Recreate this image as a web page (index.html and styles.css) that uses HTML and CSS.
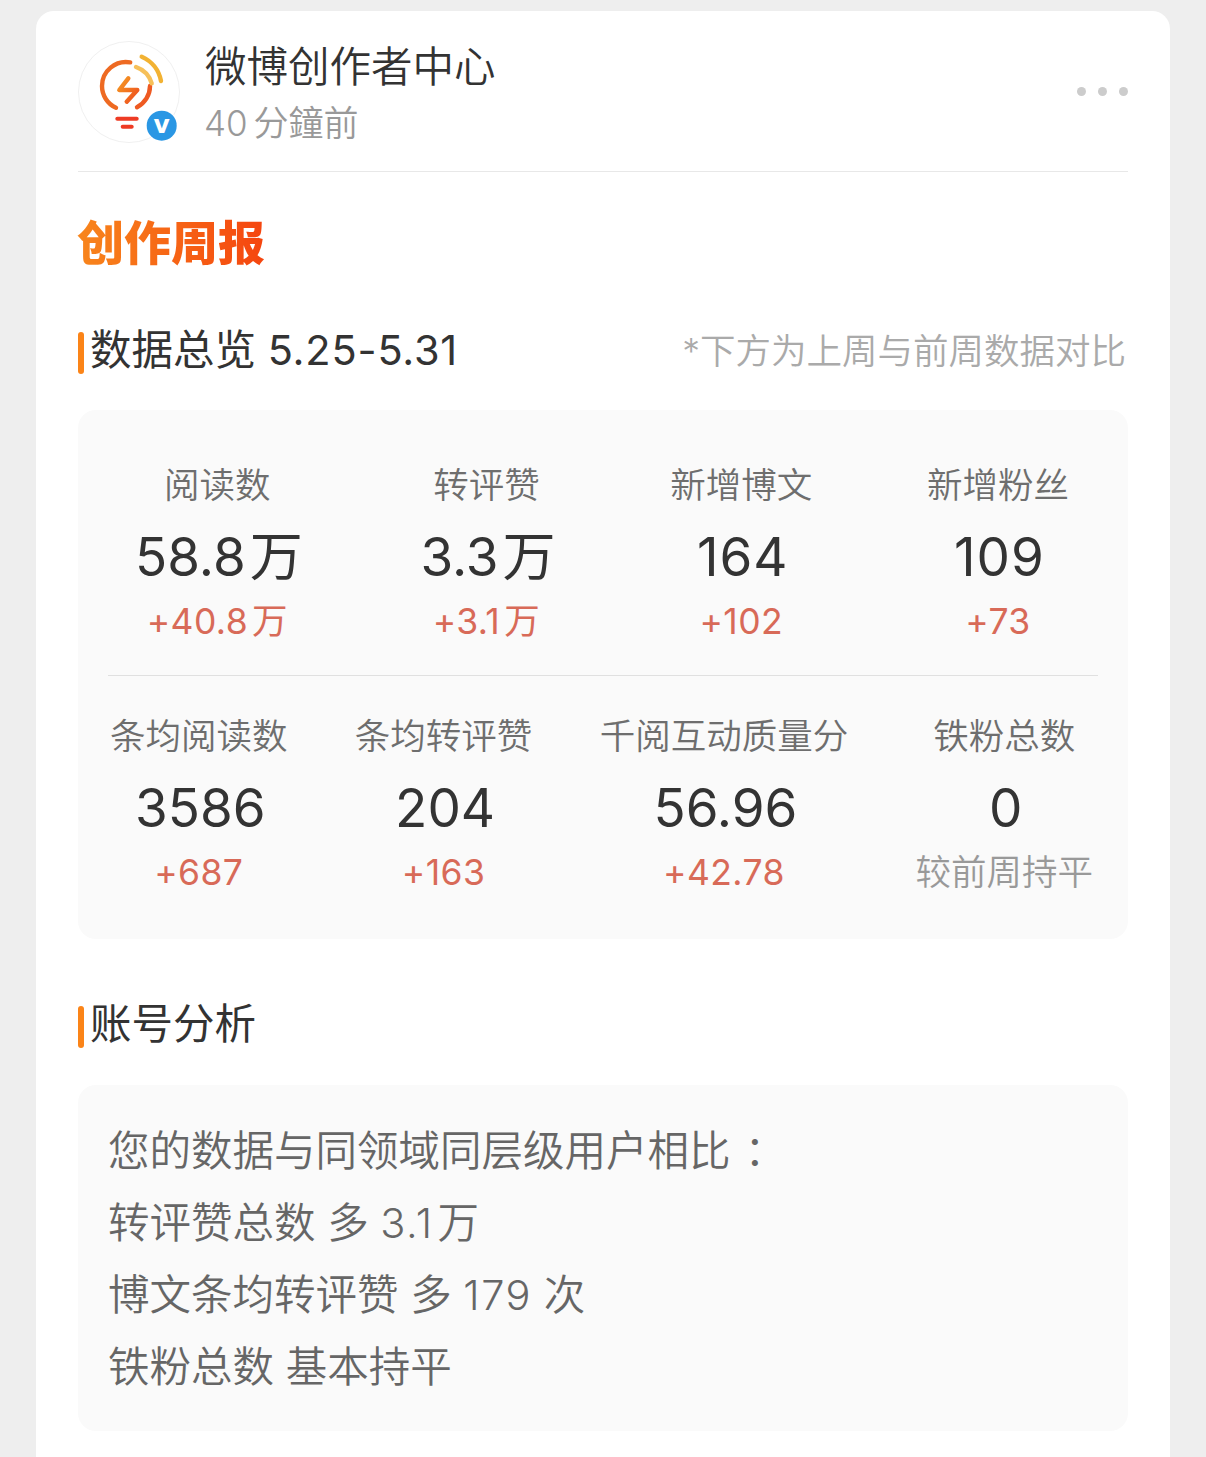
FILE: index.html
```html
<!DOCTYPE html>
<html lang="zh">
  <head>
    <meta charset="UTF-8" />
    <title>创作周报</title>
    <link rel="stylesheet" href="styles.css">
  </head>

  <body>
    <div class="card">
      <div class="head">
        <svg class="avatar" width="102" height="102" viewBox="0 0 102 102">
          <defs>
            <linearGradient id="bulb" x1="0" y1="0" x2="1" y2="1">
              <stop offset="0" stop-color="#f59a23" />
              <stop offset="1" stop-color="#ee4d1f" />
            </linearGradient>
          </defs>
          <circle cx="51" cy="51" r="50.5" fill="#fff" stroke="#f0f0f0" />
          <path d="M52.2 21.4A24 24 0 0 0 24 45A24 24 0 0 0 38 66.8" fill="none" stroke="#ee6a22" stroke-width="4.4" stroke-linecap="round" />
          <path d="M59 66.3A24 24 0 0 0 72 45" fill="none" stroke="#ee5a22" stroke-width="4.4" stroke-linecap="round" />
          <path d="M50.3 37.3L41.3 49H59.3L48.7 60.7" fill="none" stroke="url(#bulb)" stroke-width="4.4" stroke-linecap="round" stroke-linejoin="round" />
          <path d="M39.3 77.7H58.7" stroke="#ee3b24" stroke-width="4" stroke-linecap="round" />
          <path d="M44.7 85.7H53.7" stroke="#ee3b24" stroke-width="4" stroke-linecap="round" />
          <path d="M58 26A25 25 0 0 1 73.7 42.3" fill="none" stroke="#f6c05a" stroke-width="4.4" stroke-linecap="round" />
          <path d="M63.7 15.7A33 33 0 0 1 83 40" fill="none" stroke="#f2b233" stroke-width="4.4" stroke-linecap="round" />
          <circle cx="83.7" cy="84.7" r="16" fill="#fff" />
          <circle cx="83.7" cy="84.7" r="15" fill="#2a97e4" />
          <text x="83.7" y="91.5" text-anchor="middle" class="badge-v">v</text>
        </svg>
        <div class="who">
          <div class="who-name">微博创作者中心</div>
          <div class="who-time">40 分鐘前</div>
        </div>
        <div class="more"><i></i><i></i><i></i></div>
      </div>

      <h1 class="title"><span>创作周报</span></h1>

      <div class="sec">
        <h2 class="sec-name">数据总览 <span class="sec-date">5.25-5.31</span></h2>
        <div class="sec-note">*下方为上周与前周数据对比</div>
      </div>

      <div class="panel">
        <div class="stats stats-top">
          <div class="stat">
            <div class="stat-label">阅读数</div>
            <div class="stat-num">58.8<span class="unit">万</span></div>
            <div class="stat-up">+40.8<span class="unit">万</span></div>
          </div>
          <div class="stat">
            <div class="stat-label">转评赞</div>
            <div class="stat-num">3.3<span class="unit">万</span></div>
            <div class="stat-up">+3.1<span class="unit">万</span></div>
          </div>
          <div class="stat">
            <div class="stat-label">新增博文</div>
            <div class="stat-num stat-num-wide">164</div>
            <div class="stat-up">+102</div>
          </div>
          <div class="stat">
            <div class="stat-label">新增粉丝</div>
            <div class="stat-num stat-num-wide">109</div>
            <div class="stat-up">+73</div>
          </div>
        </div>
        <div class="stats stats-bottom">
          <div class="stat">
            <div class="stat-label">条均阅读数</div>
            <div class="stat-num">3586</div>
            <div class="stat-up">+687</div>
          </div>
          <div class="stat">
            <div class="stat-label">条均转评赞</div>
            <div class="stat-num">204</div>
            <div class="stat-up">+163</div>
          </div>
          <div class="stat">
            <div class="stat-label">千阅互动质量分</div>
            <div class="stat-num">56.96</div>
            <div class="stat-up">+42.78</div>
          </div>
          <div class="stat">
            <div class="stat-label">铁粉总数</div>
            <div class="stat-num">0</div>
            <div class="stat-same">较前周持平</div>
          </div>
        </div>
      </div>

      <div class="sec sec-second">
        <h2 class="sec-name">账号分析</h2>
      </div>

      <div class="panel panel-text">
        <p>您的数据与同领域同层级用户相比<span class="colon">：</span></p>
        <p>转评赞总数 多 <span class="digits">3.1</span><span class="unit">万</span></p>
        <p>博文条均转评赞 多 <span class="digits">179</span> 次</p>
        <p>铁粉总数 基本持平</p>
      </div>
    </div>
  </body>
</html>
```

FILE: styles.css
```css
* {
  box-sizing: border-box;
}

html,
body {
  height: 1457px;
  overflow: hidden;
}

body {
  margin: 0;
  background-color: #eeeeee;
  color: #333333;
  font-family: Inter, "Noto Sans CJK SC", sans-serif;
  font-weight: 350;
}

.card {
  margin: 11px 36px 0;
  padding: 0 42px 26px;
  background-color: #ffffff;
  border-radius: 18px;
  height: 1500px;
}

.head {
  display: flex;
  align-items: center;
  height: 161px;
  border-bottom: 1px solid #e8e8e8;
}

.avatar {
  flex: none;
  margin-top: 2px;
}

.badge-v {
  font-family: "DejaVu Sans", sans-serif;
  font-size: 25px;
  font-weight: 700;
  fill: #ffffff;
}

.who {
  flex: 1;
  margin-left: 25px;
  padding-top: 8px;
}

.who-name {
  font-size: 41.5px;
  line-height: 56px;
  color: #333333;
}

.who-time {
  margin-left: -1px;
  font-size: 35px;
  line-height: 56px;
  color: #999999;
  word-spacing: -4px;
}

.more {
  display: flex;
  gap: 12px;
}

.more i {
  width: 9px;
  height: 9px;
  border-radius: 50%;
  background-color: #cccccc;
}

.title {
  margin: 39px 0 0 -1px;
  font-size: 47px;
  line-height: 64px;
  font-weight: 900;
}

.title span {
  background: linear-gradient(90deg, #f8861c, #f5450f);
  -webkit-background-clip: text;
  background-clip: text;
  color: transparent;
}

.sec {
  display: flex;
  justify-content: space-between;
  align-items: center;
  margin-top: 47px;
  height: 56px;
}

.sec-second {
  margin-top: 57px;
}

.sec-name {
  margin: 0;
  padding-left: 12px;
  font-size: 41.5px;
  font-weight: 400;
  line-height: 42px;
  color: #333333;
  position: relative;
}

.sec-name::before {
  content: "";
  position: absolute;
  left: 0;
  top: 3px;
  width: 6px;
  height: 42px;
  border-radius: 3px;
  background-color: #fb8418;
}

.sec-date {
  letter-spacing: 0.8px;
}

.sec-note {
  font-size: 35.5px;
  color: #aaaaaa;
  padding: 0 2px 4px 0;
}

.panel {
  margin-top: 32px;
  background-color: #fafafa;
  border-radius: 18px;
  padding: 0 30px;
  height: 529px;
}

.stats {
  display: flex;
  justify-content: space-between;
  height: 251px;
  text-align: center;
}

.stats-top {
  padding: 46px 29px 0 24px;
  height: 266px;
  border-bottom: 1px solid #e0e0e0;
}

.stats-bottom {
  padding: 31px 5px 0 2px;
}

.stat-label {
  font-size: 35.5px;
  line-height: 60px;
  color: #6e6e6e;
}

.stat-num {
  padding-left: 3px;
  font-size: 53px;
  line-height: 82px;
  color: #333333;
  font-weight: 400;
}

.stat-num-wide {
  letter-spacing: 1px;
}

.stat-up,
.stat-same {
  font-size: 35.5px;
  line-height: 48px;
  font-weight: 400;
  color: #d86a58;
}

.stat-up {
  letter-spacing: 0.4px;
}

.stat-same {
  font-weight: 350;
  letter-spacing: 0;
  color: #999999;
}

.unit {
  margin-left: 4px;
}

.panel-text {
  margin-top: 33px;
  height: 346px;
  padding-top: 30px;
  font-size: 41.5px;
  color: #666666;
}

.panel-text p {
  margin: 0;
  line-height: 72px;
}

.digits {
  letter-spacing: 1.5px;
}

.colon {
  margin-left: 14px;
}
```
